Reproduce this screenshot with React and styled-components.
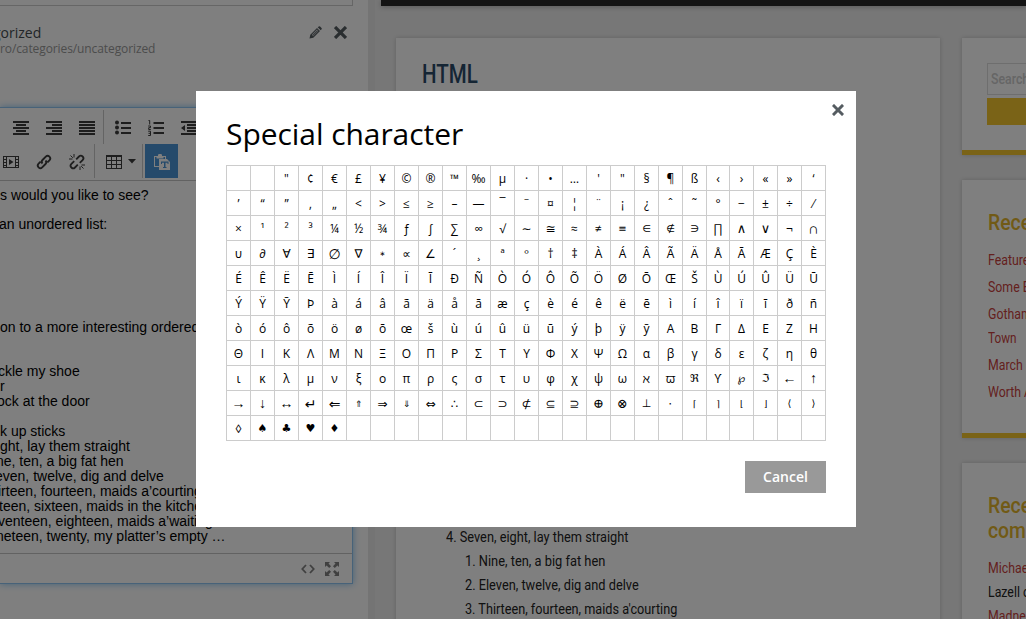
import React from 'react';
import styled, { createGlobalStyle } from 'styled-components';

const Global = createGlobalStyle`
  * { box-sizing: border-box; }
  html, body { margin: 0; padding: 0; overflow: hidden; }
  body { font-family: 'Open Sans', 'Noto Sans', sans-serif; color: #000; }
`;

const Page = styled.div`
  position: relative;
  width: 1026px;
  height: 619px;
  overflow: hidden;
  display: flex;
  background: #eee;
`;

/* ---------- editor column ---------- */
const Panel = styled.section`
  width: 368px;
  flex: none;
  height: 619px;
  background: #fff;
  display: flex;
  flex-direction: column;
`;
const FieldEnd = styled.div`
  width: 353px;
  height: 6px;
  border: 1px solid #ccc;
  border-width: 0 1px 1px 0;
`;
const CategoryRow = styled.div`
  display: flex;
  justify-content: space-between;
  height: 101px;
  padding: 17px 21px 0 0;
`;
const CategoryName = styled.div`
  font-size: 14px;
  line-height: 19px;
  color: #444b50;
  margin-left: -7px;
`;
const CategoryPath = styled.div`
  font-size: 12px;
  line-height: 14px;
  color: #999;
  letter-spacing: -0.1px;
`;
const RowActions = styled.div`
  display: flex;
  gap: 12px;
  padding-top: 3px;
  height: 18px;
  color: #555c61;
`;
const Editor = styled.div`
  width: 353px;
  height: 477px;
  border: 1px solid #8ec4f2;
  border-left: 0;
  box-shadow: 0 0 7px rgba(82, 168, 236, 0.7);
  display: flex;
  flex-direction: column;
`;
const Toolbar = styled.div`
  height: 73px;
  padding-top: 2px;
  border-bottom: 1px solid #c4c4c4;
`;
const ToolRow = styled.div`
  display: flex;
  height: 34px;
  padding-left: ${p => p.$pad}px;
`;
const Tool = styled.div`
  width: ${p => p.$w || 33}px;
  height: 34px;
  padding-top: 2px;
  flex: none;
  display: flex;
  align-items: center;
  justify-content: center;
  gap: 6px;
  color: ${p => (p.$active ? '#fff' : '#3c3c3c')};
  background: ${p => (p.$active ? '#4a94d6' : 'transparent')};
`;
const Divider = styled.div`
  width: 1px;
  height: 34px;
  background: #c8c8c8;
  margin: 0 ${p => p.$r || 0}px 0 ${p => p.$l || 0}px;
`;
const Prose = styled.div`
  flex: 1;
  padding-top: 7px;
  font: 14px/15px 'Liberation Sans', Arial, sans-serif;
  white-space: nowrap;
`;
const ProseLine = styled.div`
  height: 15px;
  margin-top: ${p => p.$gap || 0}px;
  margin-left: ${p => p.$x || 0}px;
`;
const EditorFoot = styled.div`
  height: 30px;
  border-top: 1px solid #c4c4c4;
  display: flex;
  align-items: center;
  justify-content: flex-end;
  gap: 10px;
  padding-right: 13px;
  color: #808080;
`;

/* ---------- site preview ---------- */
const Site = styled.section`
  flex: 1;
  min-width: 0;
  height: 619px;
  padding-left: 13px;
  background: linear-gradient(90deg, #e8e8e8 0, #e8e8e8 7px, #eee 7px);
  font-family: Roboto, sans-serif;
  overflow: hidden;
`;
const SiteHeader = styled.div`
  height: 6px;
  background: #282828;
  box-shadow: 0 1px 5px rgba(0, 0, 0, 0.25);
`;
const Columns = styled.div`
  display: flex;
  gap: 22px;
  padding: 32px 0 0 15px;
`;
const Article = styled.article`
  width: 544px;
  height: 600px;
  flex: none;
  background: #fff;
  box-shadow: 0 0 4px rgba(0, 0, 0, 0.18);
  padding-left: 26px;
`;
const Condensed = styled.span`
  display: inline-block;
  white-space: nowrap;
  transform: scaleX(${p => p.$sx || 0.88});
  transform-origin: left center;
`;
const Heading = styled.div`
  font-size: 25px;
  font-weight: 500;
  line-height: 30px;
  padding-top: 22px;
  height: 487px;
  color: #2a4a69;
`;
const Item = styled.div`
  font-size: 14px;
  line-height: 24px;
  height: 24px;
  color: #222;
  padding-left: ${p => p.$x}px;
`;
const Side = styled.aside`
  flex: none;
  width: 240px;
`;
const Card = styled.div`
  height: ${p => p.$h}px;
  margin-bottom: 25px;
  padding: ${p => p.$top}px 25px 0 26px;
  background: #fff;
  border-bottom: 5px solid #f4c62e;
  box-shadow: 0 0 4px rgba(0, 0, 0, 0.18);
`;
const SearchBox = styled.div`
  height: 32px;
  border: 1px solid #ddd;
  padding-left: 3px;
  margin-left: -1px;
  font-size: 14px;
  font-weight: 500;
  line-height: 30px;
  color: #ccc;
`;
const SearchButton = styled.div`
  height: 27px;
  margin: 3px 0 0 -1px;
  background: #f4c62e;
`;
const CardTitle = styled.div`
  font-size: 22px;
  font-weight: 500;
  line-height: 25px;
  color: #e3b52c;
  margin-bottom: 13px;
`;
const CardLine = styled.div`
  font-size: 14px;
  line-height: 24px;
  height: 24px;
  margin-bottom: ${p => p.$gap || 0}px;
  color: ${p => (p.$plain ? '#222' : '#c9413c')};
`;

/* ---------- dialog ---------- */
const Shade = styled.div`
  position: absolute;
  inset: 0;
  background: rgba(0, 0, 0, 0.5);
`;
const Dialog = styled.div`
  position: absolute;
  left: 196px;
  top: 91px;
  width: 660px;
  height: 436px;
  background: #fff;
  padding: 22px 30px 0;
`;
const CloseButton = styled.div`
  position: absolute;
  right: 12px;
  top: 13px;
  height: 12px;
  color: #555c61;
  display: flex;
`;
const Title = styled.h1`
  margin: 0;
  height: 52px;
  font-weight: 400;
  font-size: 30px;
  line-height: 42px;
  letter-spacing: -0.06px;
`;
const CharGrid = styled.div`
  display: grid;
  grid-template-columns: repeat(20, 24px) 23px repeat(4, 24px);
  grid-auto-rows: 25px;
  width: 600px;
  border: 0 solid #ccc;
  border-width: 1px 0 0 1px;
`;
const Char = styled.div`
  border: 0 solid #ccc;
  border-width: 0 1px 1px 0;
  padding-top: 1px;
  font: ${p => p.$size || 12}px/24px ${p => (p.$font ? `'${p.$font}', ` : '')}'Open Sans', 'Noto Sans', 'DejaVu Sans', sans-serif;
  text-align: center;
  overflow: hidden;
`;
const Actions = styled.div`
  display: flex;
  justify-content: flex-end;
  padding-top: 20px;
`;
const Cancel = styled.button`
  width: 81px;
  height: 32px;
  border: 0;
  padding: 0;
  background: #999;
  color: #fff;
  font: 600 14px/32px 'Open Sans', sans-serif;
`;

const rows = [
  '\u00a0\u00a0"¢€£¥©®™‰µ·•…\'"§¶ß‹›«»‘',
  '’“”‚„<>≤≥–—¯‾¤¦¨¡¿ˆ˜°−±÷⁄',
  '×¹²³¼½¾ƒ∫∑∞√∼≅≈≠≡∈∉∋∏∧∨¬∩',
  '∪∂∀∃∅∇∗∝∠´¸ªº†‡ÀÁÂÃÄÅĀÆÇÈ',
  'ÉÊËĒÌÍÎÏĪÐÑÒÓÔÕÖØŌŒŠÙÚÛÜŪ',
  'ÝŸȲÞàáâãäåāæçèéêëēìíîïīðñ',
  'òóôõöøōœšùúûüūýþÿȳΑΒΓΔΕΖΗ',
  'ΘΙΚΛΜΝΞΟΠΡΣΤΥΦΧΨΩαβγδεζηθ',
  'ικλμνξοπρςστυφχψωℵϖℜϒ℘ℑ←↑',
  '→↓↔↵⇐⇑⇒⇓⇔∴⊂⊃⊄⊆⊇⊕⊗⊥⋅⌈⌉⌊⌋⟨⟩',
  '◊♠♣♥♦                    ',
];

/* symbols set in another face or size than the letters */
const faces = [
  { chars: '←→↔', font: 'Liberation Serif', size: 14 },
  { chars: '↑↓', font: 'Liberation Serif', size: 14 },
  { chars: '↵⇐', font: 'DejaVu Sans', size: 14 },
  { chars: '∩', font: 'Liberation Sans', size: 15 },
  { chars: '∧∨', font: 'DejaVu Sans', size: 13 },
  { chars: '∈∉∋', font: 'DejaVu Sans', size: 10 },
  { chars: '∗', font: 'DejaVu Sans', size: 7 },
  { chars: '⇑⇓', font: 'DejaVu Sans', size: 9 },
  { chars: '≡', font: 'DejaVu Sans', size: 10 },
  { chars: '⌈⌉⌊⌋', font: 'DejaVu Sans', size: 9 },
  { chars: '⟨⟩', font: 'DejaVu Sans', size: 10 },
  { chars: '⊕⊗', font: 'DejaVu Serif', size: 13 },
  { chars: '⊥', font: 'DejaVu Sans', size: 11 },
  { chars: '∅', font: 'DejaVu Sans', size: 14 },
  { chars: '‾', font: 'DejaVu Sans', size: 8 },
  { chars: 'ℜℑ℘', font: 'DejaVu Sans', size: 11 },
  { chars: '♥♣♠♦', font: 'DejaVu Sans', size: 11 },
];
const faceOf = c => (c.trim() && faces.find(f => f.chars.includes(c))) || {};

const Svg = ({ s = 16, children, ...rest }) => (
  <svg width={s} height={s} viewBox="0 0 16 16" fill="currentColor" {...rest}>{children}</svg>
);
const Cross = ({ size = 12 }) => (
  <svg width={size} height={size} viewBox="0 0 12 12">
    <path d="M2 2l8 8M10 2l-8 8" stroke="currentColor" strokeWidth="3" strokeLinecap="square" />
  </svg>
);
const Pencil = () => (
  <svg width="13" height="13" viewBox="0 0 13 13" fill="currentColor">
    <path d="M8.700 1.300l3 3 .9-1.100q.5-.7-.1-1.300L11.100.6q-.6-.6-1.300-.1z" />
    <path fillRule="evenodd" d="M8 2L1.300 8.700.5 12.500l3.800-.8L11 5zM8 3.600L9.400 5 4.200 10.200 2.800 8.800z" />
    <path d="M3.100 9.100l5.100-5.100 1 1-5.100 5.100z" opacity=".8" />
  </svg>
);
const Lines = ({ spans }) => (
  <Svg>{spans.map(([x, w], i) => <rect key={i} x={x} y={i * 3 + 1} width={w} height="2" />)}</Svg>
);
const Bullets = () => (
  <Svg>
    {[2, 7, 12].map(y => <circle key={y} cx="2" cy={y + 0.5} r="2" />)}
    {[2, 7, 12].map(y => <rect key={y} x="6" y={y} width="10" height="2" />)}
  </Svg>
);
const Numbers = () => (
  <Svg>
    {[2, 7, 12].map(y => <rect key={y} x="5.500" y={y} width="10.500" height="2" />)}
    <path d="M.5 .5h1.200v4M.2 6h2.300v1.700H.7v1.800h2.100M.2 11.200h2.300v4.300H.2M.5 13.300h2" fill="none" stroke="currentColor" />
  </Svg>
);
const Outdent = () => (
  <Svg>
    <path d="M0 1h16v2H0zM6 4h10v2H6zM6 7h10v2H6zM6 10h10v2H6zM0 13h16v2H0zM4 5v6L0 8z" />
  </Svg>
);
const Film = () => (
  <Svg>
    <path fillRule="evenodd" d="M0 2h16v12H0zM1 3v2h2V3zM1 6v2h2V6zM1 9v2h2V9zM1 12v1h2v-1zM13 3v2h2V3zM13 6v2h2V6zM13 9v2h2V9zM13 12v1h2v-1zM4 3v10h8V3z" />
    <path d="M6 5l4.500 3L6 11z" />
  </Svg>
);
const chain = 'M6.500 9.500a2.600 2.600 0 0 1 0-3.500l3.300-3.300a2.500 2.500 0 0 1 3.600 3.600l-2 2M9.500 6.500a2.600 2.600 0 0 1 0 3.500l-3.300 3.300a2.500 2.500 0 0 1-3.600-3.600l2-2';
const LinkIcon = () => (
  <Svg><path d={chain} fill="none" stroke="currentColor" strokeWidth="1.900" /></Svg>
);
const Unlink = () => (
  <Svg>
    <path d="M7.200 5.300l2.800-2.800a2.500 2.500 0 0 1 3.600 3.600L10.800 8.900M8.800 10.700L6 13.500a2.500 2.500 0 0 1-3.600-3.600L5.200 7.100" fill="none" stroke="currentColor" strokeWidth="1.800" />
    <path d="M5 0v3.500M1.500 1.500l2.300 2.300M0 5h3.500M11 12.500V16M12.200 12.200l2.300 2.300M12.500 11H16" stroke="currentColor" fill="none" />
  </Svg>
);
const TableIcon = () => (
  <Svg><path fillRule="evenodd" d="M0 1h16v14H0zM1 3v3h4V3zM6 3v3h4V3zM11 3v3h4V3zM1 7v3h4V7zM6 7v3h4V7zM11 7v3h4V7zM1 11v3h4v-3zM6 11v3h4v-3zM11 11v3h4v-3z" /></Svg>
);
const Caret = () => (
  <svg width="8" height="7" viewBox="0 0 8 7" fill="currentColor"><path d="M0 0h8L4 4.500z" /></svg>
);
const Paste = () => (
  <Svg>
    <path fillRule="evenodd" d="M0 2h4V1.200Q4 0 5.200 0h1.600Q8 0 8 1.200V2h4v3h-1V3H9.500v1.500h-7V3H1v9h4v1H0z" />
    <path fillRule="evenodd" d="M5 5h8l3 3v8H5zM7 7.500v2.500h1V8.800h2V13H9v1h3.500v-1h-1V8.800h2V10h1V7.500z" />
  </Svg>
);
const Code = () => (
  <svg width="14" height="10" viewBox="0 0 14 10" fill="none" stroke="currentColor" strokeWidth="1.800">
    <path d="M5 1L1.300 5 5 9M9 1l3.700 4L9 9" />
  </svg>
);
const Expand = () => (
  <svg width="14" height="14" viewBox="0 0 14 14" fill="currentColor">
    <path d="M0 0h5L3.500 1.600 6 4.200 4.200 6 1.600 3.500 0 5zM14 0v5l-1.600-1.500L9.800 6 8 4.200l2.500-2.600L9 0zM0 14V9l1.600 1.500L4.200 8 6 9.800l-2.500 2.600L5 14zM14 14H9l1.500-1.600L8 9.800 9.800 8l2.600 2.500L14 9z" />
  </svg>
);

const prose = [
  ['s would you like to see?'],
  ['an unordered list:', 14, -1],
  ['on to a more interesting ordered list', 88],
  ['ckle my shoe', 29, -2],
  ['r', 0, 0],
  ['ock at the door', 0, -3],
  ['k up sticks', 15, 0],
  ['ght, lay them straight', 0, 0],
  ['ne, ten, a big fat hen', 0, -4],
  ['even, twelve, dig and delve', 0, -5],
  ['irteen, fourteen, maids a’courting', 0, -2],
  ['teen, sixteen, maids in the kitchen', 0, -1],
  ['venteen, eighteen, maids a’waiting', 0, -2],
  ['neteen, twenty, my platter’s empty …', 0, -4],
];

export default function App() {
  return (
    <Page>
      <Global />
      <Panel>
        <FieldEnd />
        <CategoryRow>
          <div>
            <CategoryName>gorized</CategoryName>
            <CategoryPath>ro/categories/uncategorized</CategoryPath>
          </div>
          <RowActions><Pencil /><Cross size={13} /></RowActions>
        </CategoryRow>
        <Editor>
          <Toolbar>
            <ToolRow $pad={4}>
              <Tool><Lines spans={[[0, 16], [3, 10], [0, 16], [3, 10], [0, 16]]} /></Tool>
              <Tool><Lines spans={[[0, 16], [6, 10], [0, 16], [6, 10], [0, 16]]} /></Tool>
              <Tool><Lines spans={[[0, 16], [0, 16], [0, 16], [0, 16], [0, 16]]} /></Tool>
              <Divider $r={2} />
              <Tool><Bullets /></Tool>
              <Tool><Numbers /></Tool>
              <Tool><Outdent /></Tool>
            </ToolRow>
            <ToolRow $pad={0}>
              <Tool $w={22}><Film /></Tool>
              <Tool $w={44}><LinkIcon /></Tool>
              <Tool $w={22}><Unlink /></Tool>
              <Divider $l={6} />
              <Tool $w={51}><TableIcon /><Caret /></Tool>
              <Divider $l={-4} $r={2} />
              <Tool $active><Paste /></Tool>
            </ToolRow>
          </Toolbar>
          <Prose>
            {prose.map(([text, gap, x]) => <ProseLine key={text} $gap={gap} $x={x}>{text}</ProseLine>)}
          </Prose>
          <EditorFoot><Code /><Expand /></EditorFoot>
        </Editor>
      </Panel>

      <Site>
        <SiteHeader />
        <Columns>
          <Article>
            <Heading><Condensed $sx={0.82}>HTML</Condensed></Heading>
            <Item $x={24}><Condensed $sx={0.913}>4. Seven, eight, lay them straight</Condensed></Item>
            <Item $x={43}><Condensed $sx={0.918}>1. Nine, ten, a big fat hen</Condensed></Item>
            <Item $x={43}><Condensed $sx={0.913}>2. Eleven, twelve, dig and delve</Condensed></Item>
            <Item $x={43}><Condensed $sx={0.905}>3. Thirteen, fourteen, maids a'courting</Condensed></Item>
          </Article>
          <Side>
            <Card $h={117} $top={25}>
              <SearchBox><Condensed>Search</Condensed></SearchBox>
              <SearchButton />
            </Card>
            <Card $h={258} $top={30}>
              <CardTitle><Condensed>Recent</Condensed></CardTitle>
              <CardLine $gap={3}><Condensed>Featured</Condensed></CardLine>
              <CardLine $gap={3}><Condensed>Some B</Condensed></CardLine>
              <CardLine><Condensed>Gotham</Condensed></CardLine>
              <CardLine $gap={3}><Condensed $sx={0.84}>Town</Condensed></CardLine>
              <CardLine $gap={3}><Condensed>March M</Condensed></CardLine>
              <CardLine><Condensed>Worth A</Condensed></CardLine>
            </Card>
            <Card $h={258} $top={30}>
              <CardTitle><Condensed>Recent</Condensed><br /><Condensed>comments</Condensed></CardTitle>
              <CardLine><Condensed>Michael</Condensed></CardLine>
              <CardLine $plain><Condensed>Lazell on</Condensed></CardLine>
              <CardLine><Condensed>Madness</Condensed></CardLine>
            </Card>
          </Side>
        </Columns>
      </Site>

      <Shade />
      <Dialog>
        <CloseButton><Cross /></CloseButton>
        <Title>Special character</Title>
        <CharGrid>
          {rows.flatMap((row, r) => [...row].map((c, i) => {
            const { font, size } = faceOf(c);
            return <Char key={`${r}-${i}`} $font={font} $size={size}>{c}</Char>;
          }))}
        </CharGrid>
        <Actions><Cancel>Cancel</Cancel></Actions>
      </Dialog>
    </Page>
  );
}
